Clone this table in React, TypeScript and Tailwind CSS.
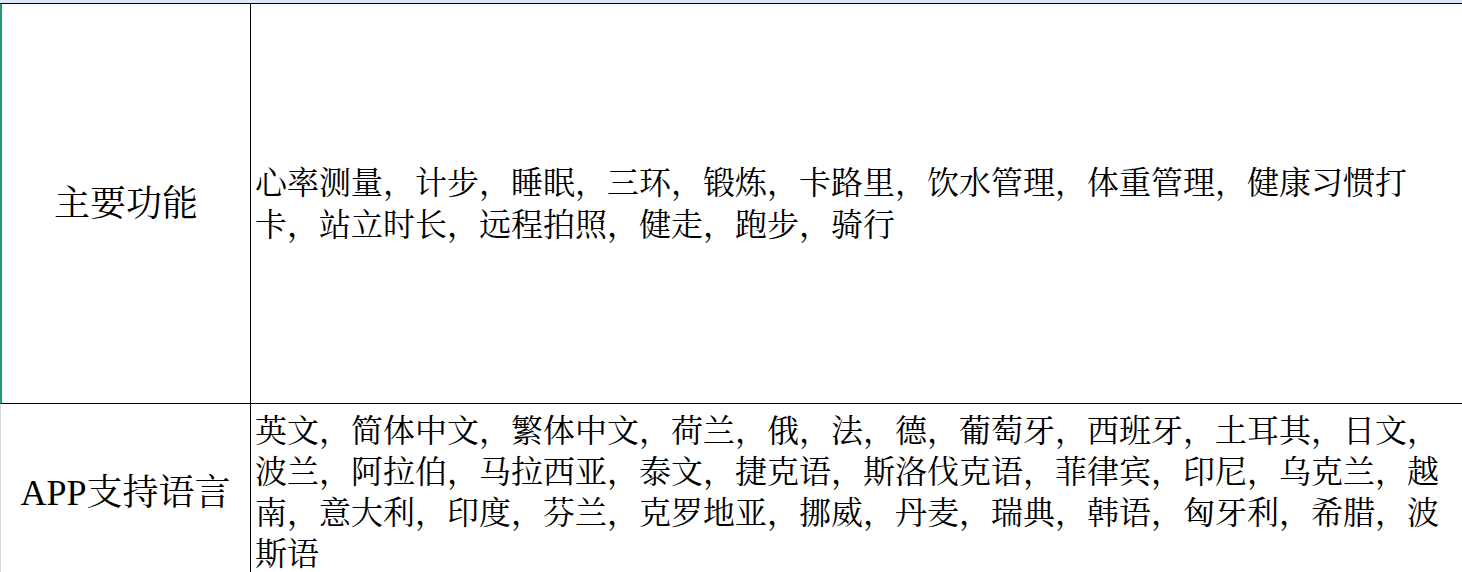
const mainFeatures =
  '心率测量，计步，睡眠，三环，锻炼，卡路里，饮水管理，体重管理，健康习惯打卡，站立时长，远程拍照，健走，跑步，骑行';

const languages =
  '英文，简体中文，繁体中文，荷兰，俄，法，德，葡萄牙，西班牙，土耳其，日文，波兰，阿拉伯，马拉西亚，泰文，捷克语，斯洛伐克语，菲律宾，印尼，乌克兰，越南，意大利，印度，芬兰，克罗地亚，挪威，丹麦，瑞典，韩语，匈牙利，希腊，波斯语';

const cjk = "font-['Liberation_Serif','Noto_Serif_CJK_SC','Noto_Sans_CJK_SC',serif]";

export default function App() {
  return (
    <div className={`w-[1462px] h-[572px] overflow-hidden bg-white text-black ${cjk}`}>
      {/* sheet header strip */}
      <div className="h-[3px] bg-[#dde7f2]" />

      <div className="grid grid-cols-[251px_1fr] border-t border-black">
        {/* row 1 */}
        <div className="h-[400px] flex items-center justify-center border-l-2 border-l-[#1f9d6f] border-r border-r-black border-b border-b-black">
          <span className="text-[36px] leading-none">主要功能</span>
        </div>
        <div className="h-[400px] flex items-center pl-1 border-b border-black">
          <p className="text-[32px] leading-[42px] w-[1200px]">{mainFeatures}</p>
        </div>

        {/* row 2 */}
        <div className="h-[178px] flex items-center justify-center border-l border-l-[#d9d9d9] border-r border-r-black">
          <span className="text-[36px] leading-none">APP支持语言</span>
        </div>
        <div className="h-[178px] flex items-center pl-1">
          <p className="text-[32px] leading-[41px] w-[1200px]">{languages}</p>
        </div>
      </div>
    </div>
  );
}
